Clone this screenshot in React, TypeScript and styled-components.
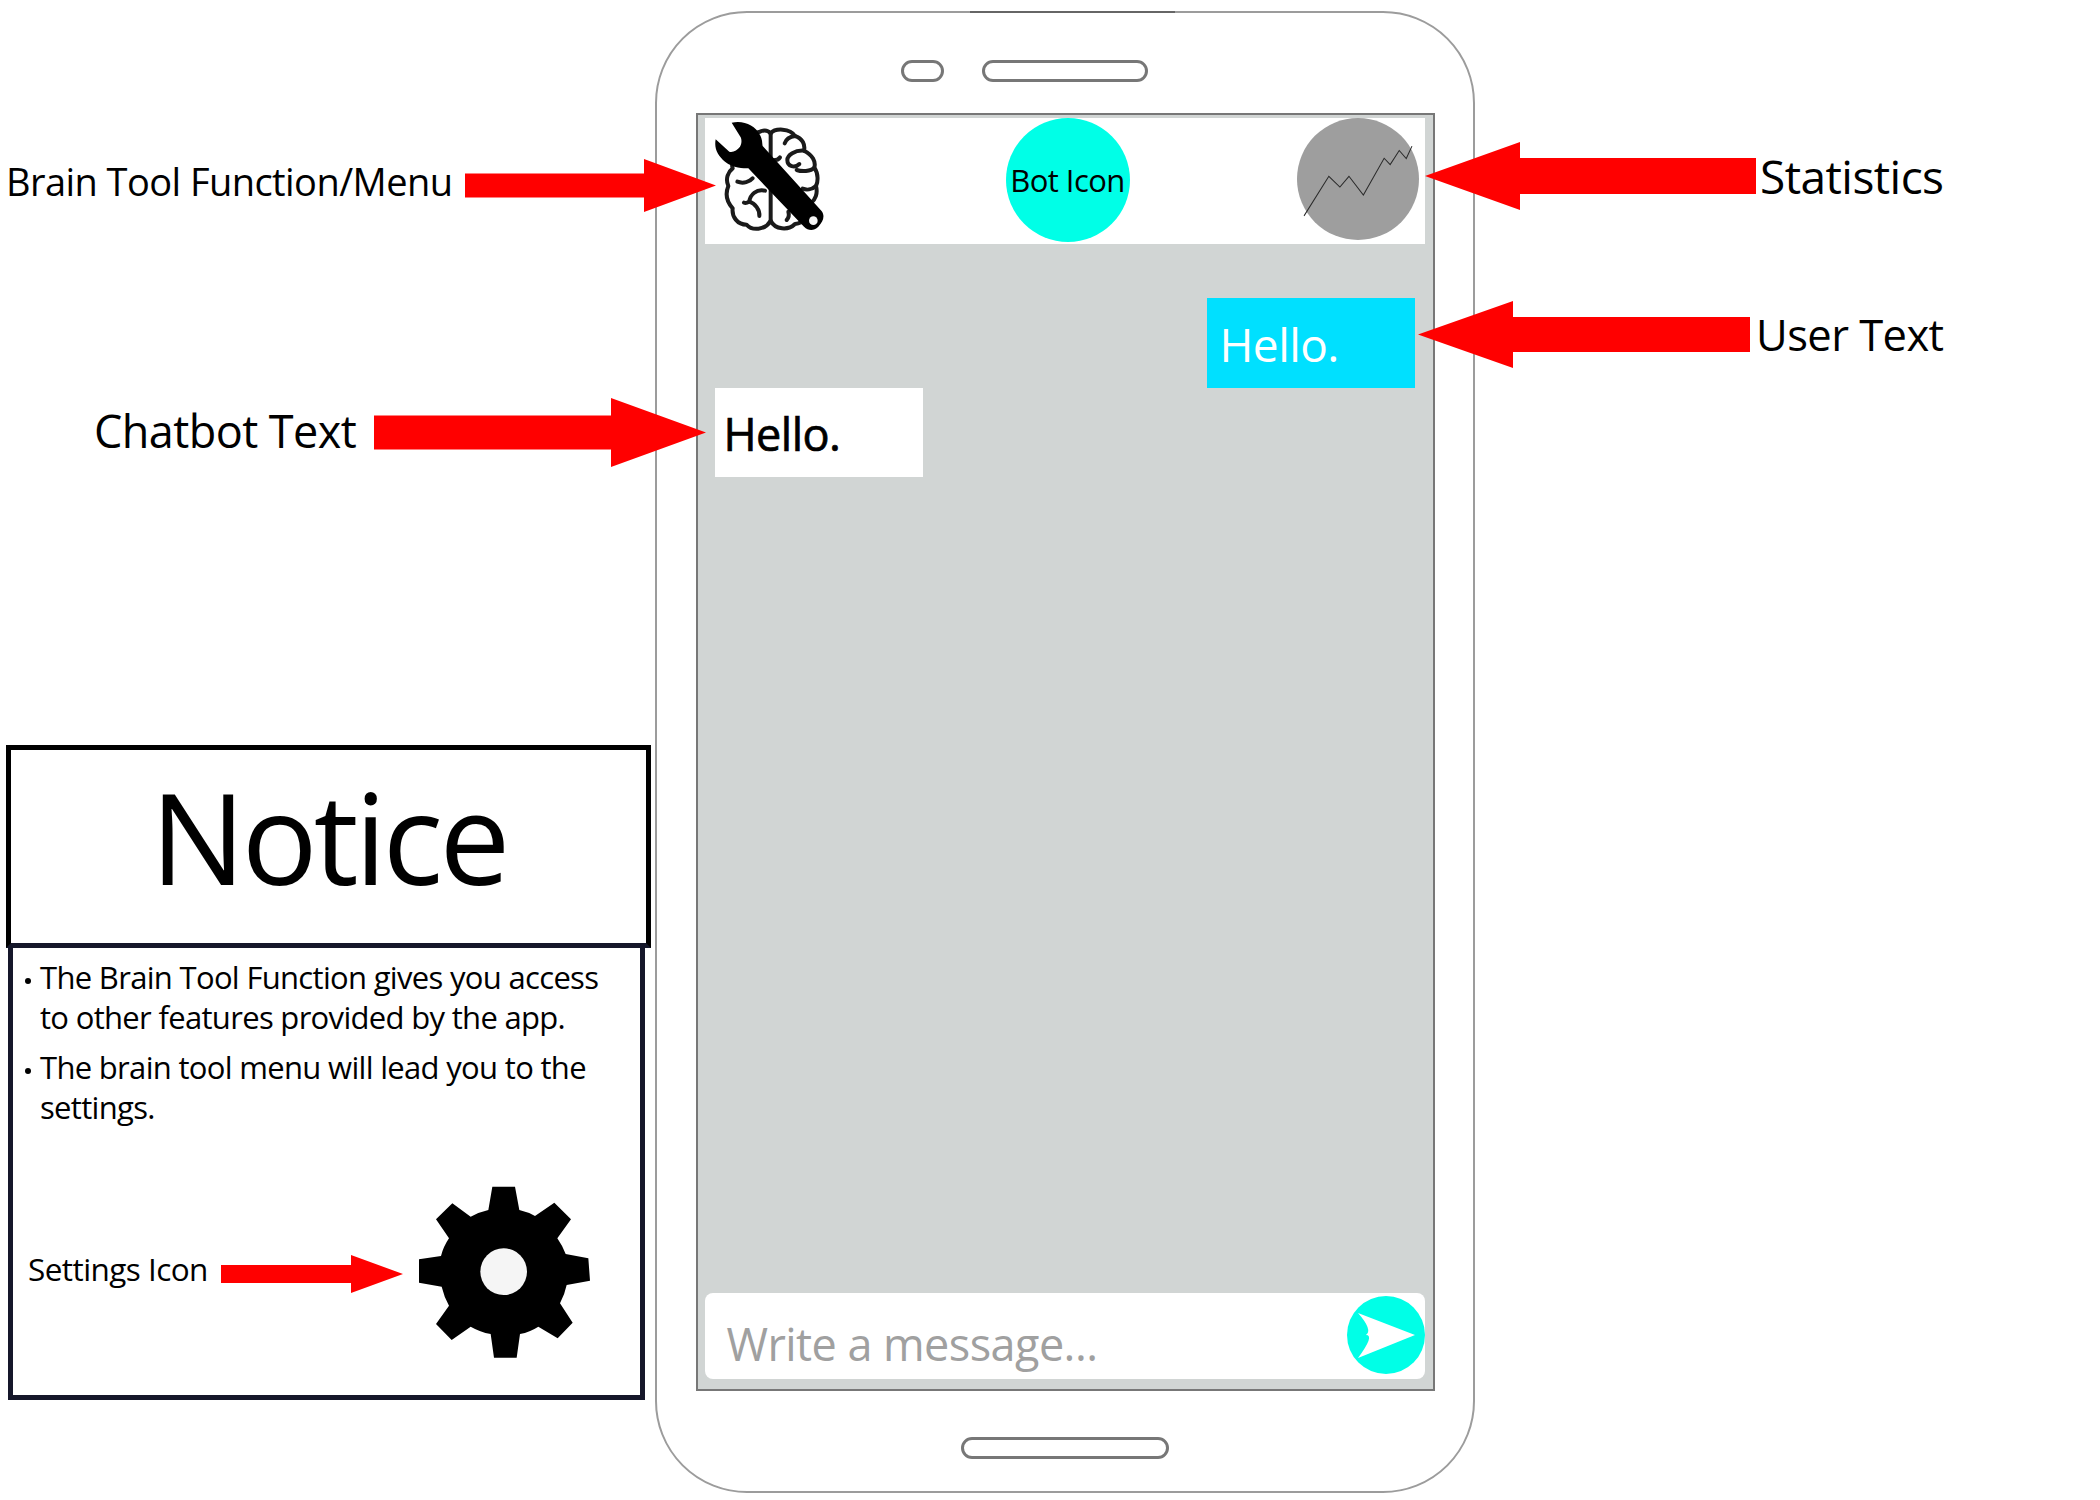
import styled, { createGlobalStyle } from "styled-components";

const GlobalStyle = createGlobalStyle`
  html, body {
    margin: 0;
    padding: 0;
    background: #fff;
  }
  * {
    box-sizing: border-box;
  }
`;

const Page = styled.div`
  width: 2100px;
  height: 1500px;
  display: grid;
  grid-template-columns: 655px 820px 1fr;
  font-family: "Open Sans", "Noto Sans", sans-serif;
  letter-spacing: -0.035em;
  color: #000;
  overflow: hidden;
`;

const LeftColumn = styled.div`
  position: relative;
  z-index: 2;
  padding-top: 159px;
  display: flex;
  flex-direction: column;
`;

const RightColumn = styled.div`
  position: relative;
  z-index: 2;
  padding-top: 142px;
  display: flex;
  flex-direction: column;
`;

const Callout = styled.div<{ $top?: number; $left?: number; $height: number; $gap: number }>`
  display: flex;
  align-items: center;
  height: ${(p) => p.$height}px;
  margin-top: ${(p) => p.$top ?? 0}px;
  margin-left: ${(p) => p.$left ?? 0}px;
  gap: ${(p) => p.$gap}px;
  white-space: nowrap;
`;

const CalloutLabel = styled.span<{ $size: number; $width: number; $shift?: number }>`
  font-size: ${(p) => p.$size}px;
  width: ${(p) => p.$width}px;
  margin-top: ${(p) => p.$shift ?? 0}px;
  flex: none;
  line-height: 1;
`;

const NoticeHead = styled.div`
  margin: 278px 4px 0 6px;
  height: 203px;
  border: 5px solid #000;
  border-bottom-color: #15172a;
  display: flex;
  justify-content: center;
  align-items: center;
  font-size: 126px;
  letter-spacing: -0.03em;
  line-height: 1;
  padding-bottom: 22px;
`;

const NoticeBody = styled.div`
  margin: 0 10px 0 8px;
  height: 452px;
  border: 5px solid #15172a;
  border-top: none;
  padding: 9px 0 0 12px;
`;

const BulletList = styled.ul`
  list-style: none;
  margin: 0;
  padding: 0;
  display: flex;
  flex-direction: column;
  gap: 10px;
`;

const BulletItem = styled.li`
  position: relative;
  padding-left: 15px;
  font-size: 31px;
  letter-spacing: -0.022em;
  line-height: 40px;
  &::before {
    content: "";
    position: absolute;
    left: 0;
    top: 21px;
    width: 6px;
    height: 6px;
    border-radius: 50%;
    background: #000;
  }
`;

const SettingsRow = styled.div`
  display: flex;
  align-items: center;
  margin-top: 43px;
  gap: 14px;
`;

const SettingsLabel = styled.span`
  font-size: 31.5px;
  line-height: 1;
  width: 179px;
  margin-left: 3px;
  white-space: nowrap;
  margin-top: -2px;
`;

const SettingsArrow = styled.div`
  display: flex;
  margin-top: 8px;
`;

const GearIcon = styled.svg`
  width: 200px;
  height: 200px;
  margin-left: -17px;
  flex: none;
`;

const Phone = styled.div`
  position: relative;
  margin-top: 11px;
  height: 1482px;
  border: 2px solid #9c9c9c;
  border-radius: 92px;
  display: flex;
  flex-direction: column;
  align-items: center;
  &::before {
    content: "";
    position: absolute;
    top: -2px;
    left: 313px;
    width: 205px;
    height: 2px;
    background: #666;
  }
`;

const SensorBar = styled.div`
  height: 100px;
  padding-top: 47px;
  display: flex;
  gap: 38px;
  margin-right: 81px;
`;

const Pill = styled.div<{ $width: number }>`
  width: ${(p) => p.$width}px;
  height: 22px;
  border: 3px solid #777;
  border-radius: 11px;
`;

const Screen = styled.div`
  width: 739px;
  height: 1278px;
  border: 2px solid #777;
  background: #d1d5d4;
  padding: 3px 8px 10px 7px;
  display: flex;
  flex-direction: column;
`;

const ChatHeader = styled.div`
  height: 126px;
  background: #fff;
  display: grid;
  grid-template-columns: 1fr 124px 1fr;
  align-items: start;
  flex: none;
`;

const BrainIcon = styled.svg`
  width: 180px;
  height: 160px;
  margin: -18px 0 0 -25px;
`;

const BotCircle = styled.div`
  width: 124px;
  height: 124px;
  margin-left: 3px;
  border-radius: 50%;
  background: #00ffe7;
  display: flex;
  align-items: center;
  justify-content: center;
  font-size: 31px;
  white-space: nowrap;
`;

const StatsCircle = styled.svg`
  width: 122px;
  height: 122px;
  justify-self: end;
  margin-right: 6px;
`;

const Messages = styled.div`
  flex: 1;
  display: flex;
  flex-direction: column;
  padding: 53px 10px 0 10px;
`;

const Bubble = styled.div<{ $user?: boolean }>`
  width: 208px;
  height: ${(p) => (p.$user ? 90 : 89)}px;
  margin-top: ${(p) => (p.$user ? 1 : 0)}px;
  align-self: ${(p) => (p.$user ? "flex-end" : "flex-start")};
  background: ${(p) => (p.$user ? "#00e0ff" : "#fff")};
  color: ${(p) => (p.$user ? "#fff" : "#000")};
  font-size: ${(p) => (p.$user ? 46 : 45)}px;
  -webkit-text-stroke: ${(p) => (p.$user ? "0" : "0.7px #000")};
  line-height: 1;
  display: flex;
  align-items: center;
  padding-left: ${(p) => (p.$user ? 13 : 9)}px;
  padding-top: 2px;
`;

const Composer = styled.div`
  height: 86px;
  flex: none;
  background: #fff;
  border-radius: 8px;
  display: flex;
  align-items: center;
  justify-content: space-between;
  padding-left: 22px;
`;

const Placeholder = styled.span`
  font-size: 45px;
  line-height: 1;
  color: #a0a0a0;
  margin-top: 14px;
`;

const SendButton = styled.svg`
  width: 78px;
  height: 78px;
  flex: none;
  margin-top: -2px;
`;

const HomeBar = styled.div`
  margin-top: 46px;
  width: 208px;
  height: 22px;
  border: 3px solid #777;
  border-radius: 11px;
`;

const Arrow = ({
  width,
  height,
  head,
  shaft,
  flip,
}: {
  width: number;
  height: number;
  head: number;
  shaft: number;
  flip?: boolean;
}) => {
  const top = (height - shaft) / 2;
  const bottom = top + shaft;
  const neck = width - head;
  return (
    <svg
      width={width}
      height={height}
      viewBox={`0 0 ${width} ${height}`}
      style={{ flex: "none", transform: flip ? "scaleX(-1)" : undefined }}
    >
      <polygon
        fill="#ff0000"
        points={`0,${top} ${neck},${top} ${neck},0 ${width},${height / 2} ${neck},${height} ${neck},${bottom} 0,${bottom}`}
      />
    </svg>
  );
};

const BrainWrench = () => (
  <BrainIcon viewBox="0 0 540 480">
    <g fill="none" stroke="#1a1a1a" strokeWidth="12" strokeLinecap="round" strokeLinejoin="round">
      <path d="M272 100C285 84 330 84 345 108C368 115 376 135 372 152C398 165 408 185 403 203C416 222 414 246 408 258C414 280 406 300 392 310C392 345 372 370 345 372C325 392 285 390 272 362C255 392 215 392 200 374C172 374 155 350 158 325C140 305 136 280 145 258C135 235 145 215 158 205C150 180 175 165 190 160" />
      <path d="M190 160C185 130 210 100 240 95C255 88 265 92 272 100" />
      <path d="M272 100V362" />
      <path d="M345 108C330 110 318 118 314 130" />
      <path d="M372 152C345 150 322 165 322 180C322 200 345 205 358 192" />
      <path d="M403 203C392 215 365 215 350 210" />
      <path d="M408 258C395 270 378 270 368 266" />
      <path d="M272 180C285 182 295 180 300 172" />
      <path d="M272 225C290 225 305 235 312 248" />
      <path d="M172 245C190 252 210 245 218 235" />
      <path d="M255 272C230 265 210 285 208 305C200 310 195 310 192 308" />
      <path d="M208 305C225 310 240 330 238 348" />
      <path d="M325 335C328 345 325 355 320 360" />
    </g>
    <path
      fill="#000"
      d="M155 68C190 60 225 75 240 105C248 120 246 130 248 138L424 332C436 346 430 365 415 380C400 394 385 392 372 380L205 205C190 205 160 205 135 185C112 165 102 145 107 118L148 155C160 158 172 150 180 140C186 130 185 118 182 112Z"
    />
    <circle cx="400" cy="362" r="13" fill="#f5f5f5" />
  </BrainIcon>
);

const App = () => (
  <>
    <GlobalStyle />
    <Page>
      <LeftColumn>
        <Callout $left={6} $height={53} $gap={13}>
          <CalloutLabel $size={38} $width={446} $shift={-9}>Brain Tool Function/Menu</CalloutLabel>
          <Arrow width={251} height={53} head={72} shaft={24} />
        </Callout>
        <Callout $top={186} $left={94} $height={69} $gap={16}>
          <CalloutLabel $size={45} $width={264} $shift={-5}>Chatbot Text</CalloutLabel>
          <Arrow width={332} height={69} head={95} shaft={34} />
        </Callout>
        <NoticeHead>Notice</NoticeHead>
        <NoticeBody>
          <BulletList>
            <BulletItem>
              The Brain Tool Function gives you access
              <br />
              to other features provided by the app.
            </BulletItem>
            <BulletItem>
              The brain tool menu will lead you to the
              <br />
              settings.
            </BulletItem>
          </BulletList>
          <SettingsRow>
            <SettingsLabel>Settings Icon</SettingsLabel>
            <SettingsArrow>
              <Arrow width={182} height={38} head={52} shaft={18} />
            </SettingsArrow>
            <GearIcon viewBox="0 0 600 600">
              <path
                fill="#000"
                d="M277 50H345L358 120Q384 126 405 138L463 98L513 148L472 205Q488 228 497 252L565 265L570 332L500 345Q494 374 480 400L518 458L473 505L415 470Q390 486 360 492L350 563H282L272 492Q240 486 212 470L155 510L108 462L147 407Q132 380 125 350L57 338V268L123 258Q130 230 147 205L108 148L157 100L212 140Q238 126 265 120Z"
              />
              <circle cx="311" cy="305" r="70" fill="#f5f5f5" />
            </GearIcon>
          </SettingsRow>
        </NoticeBody>
      </LeftColumn>

      <Phone>
        <SensorBar>
          <Pill $width={43} />
          <Pill $width={166} />
        </SensorBar>
        <Screen>
          <ChatHeader>
            <BrainWrench />
            <BotCircle>Bot Icon</BotCircle>
            <StatsCircle viewBox="52 54 364 364">
              <circle cx="234" cy="236" r="182" fill="#9e9e9e" />
              <polyline
                fill="none"
                stroke="#2a2a2a"
                strokeWidth="3"
                points="73,346 147,228 180,260 207,228 250,284 312,174 330,193 357,151 378,175 395,138"
              />
            </StatsCircle>
          </ChatHeader>
          <Messages>
            <Bubble $user>Hello.</Bubble>
            <Bubble>Hello.</Bubble>
          </Messages>
          <Composer>
            <Placeholder>Write a message...</Placeholder>
            <SendButton viewBox="0 0 78 78">
              <circle cx="39" cy="39" r="39" fill="#00ffe7" />
              <path fill="#fff" d="M11 17L68 39L11 62Q28 39 19 39Q26 34 11 17Z" />
            </SendButton>
          </Composer>
        </Screen>
        <HomeBar />
      </Phone>

      <RightColumn>
        <Callout $left={-50} $height={68} $gap={4}>
          <Arrow width={331} height={68} head={95} shaft={36} flip />
          <CalloutLabel $size={46} $width={190}>Statistics</CalloutLabel>
        </Callout>
        <Callout $top={91} $left={-57} $height={67} $gap={6}>
          <Arrow width={332} height={67} head={95} shaft={35} flip />
          <CalloutLabel $size={43.5} $width={190}>User Text</CalloutLabel>
        </Callout>
      </RightColumn>
    </Page>
  </>
);

export default App;
